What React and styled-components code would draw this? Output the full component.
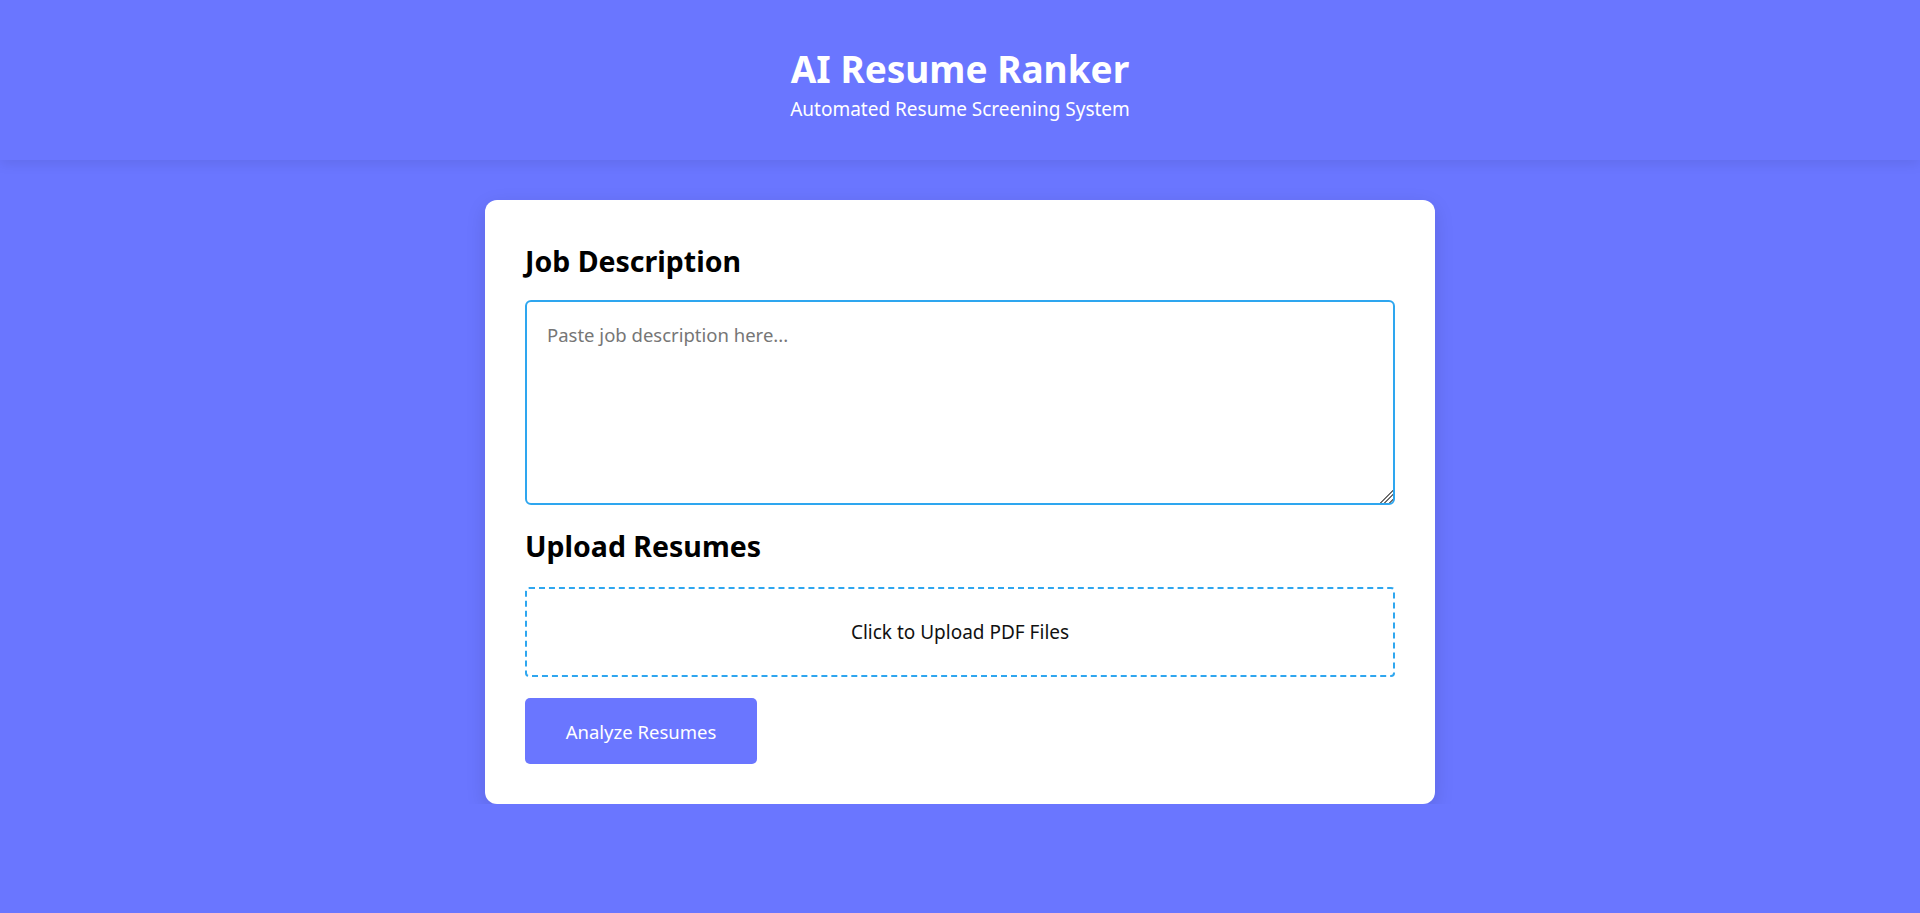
import styled, { createGlobalStyle } from 'styled-components'

const GlobalStyle = createGlobalStyle`
  body {
    margin: 0;
    background: #6a76ff;
    font-family: 'Noto Sans', 'Open Sans', sans-serif;
  }
`

//#region Layout
const Header = styled.header`
  height: 160px;
  box-sizing: border-box;
  padding-top: 44px;
  text-align: center;
  color: white;
  box-shadow: 0 4px 12px rgba(0, 0, 0, 0.08);
`
const Title = styled.h1`
  margin: 0;
  font-size: 37px;
  line-height: 50px;
  font-weight: 700;
`
const Subtitle = styled.p`
  margin: 3px 0 0;
  font-size: 19px;
  line-height: 24px;
`
const Main = styled.main`
  padding-top: 40px;
`
const Card = styled.section`
  width: 950px;
  box-sizing: border-box;
  margin: 0 auto;
  padding: 40px;
  background: white;
  border-radius: 12px;
  box-shadow: 0 6px 20px rgba(0, 0, 0, 0.12);
`
const Heading = styled.h2`
  margin: ${(p) => p.$top || 0}px 0 0;
  font-size: 28.5px;
  line-height: 42px;
  font-weight: 700;
  color: #000;
`
const DescriptionInput = styled.textarea`
  display: block;
  width: 100%;
  height: 205px;
  box-sizing: border-box;
  margin-top: 18px;
  padding: 20px 20px;
  border: 2px solid #2ea6ef;
  border-radius: 6px;
  font-family: inherit;
  font-size: 18.5px;
  outline: none;
  resize: vertical;

  &::placeholder {
    color: #767676;
  }

  &::-webkit-resizer {
    background:
      linear-gradient(135deg, #fff 52%, transparent 52%),
      repeating-linear-gradient(135deg, transparent 0 2px, #6f6f6f 2px 3.2px);
  }
`
const UploadBox = styled.label`
  display: flex;
  align-items: center;
  justify-content: center;
  height: 90px;
  box-sizing: border-box;
  margin-top: 20px;
  border: 2px dashed #2ea6ef;
  border-radius: 4px;
  font-size: 19px;
  color: #111;
  cursor: pointer;

  input {
    display: none;
  }
`
const AnalyzeButton = styled.button`
  display: block;
  margin-top: 21px;
  width: 232px;
  height: 66px;
  border: 0;
  border-radius: 5px;
  background: #6a76ff;
  color: white;
  font-family: inherit;
  font-size: 18.5px;
  cursor: pointer;
`
//#endregion

export default function App() {
  return (
    <>
      <GlobalStyle />
      <Header>
        <Title>AI Resume Ranker</Title>
        <Subtitle>Automated Resume Screening System</Subtitle>
      </Header>
      <Main>
        <Card>
          <Heading>Job Description</Heading>
          <DescriptionInput placeholder="Paste job description here..." />
          <Heading $top={20}>Upload Resumes</Heading>
          <UploadBox>
            <input type="file" accept="application/pdf" multiple />
            Click to Upload PDF Files
          </UploadBox>
          <AnalyzeButton>Analyze Resumes</AnalyzeButton>
        </Card>
      </Main>
    </>
  )
}
